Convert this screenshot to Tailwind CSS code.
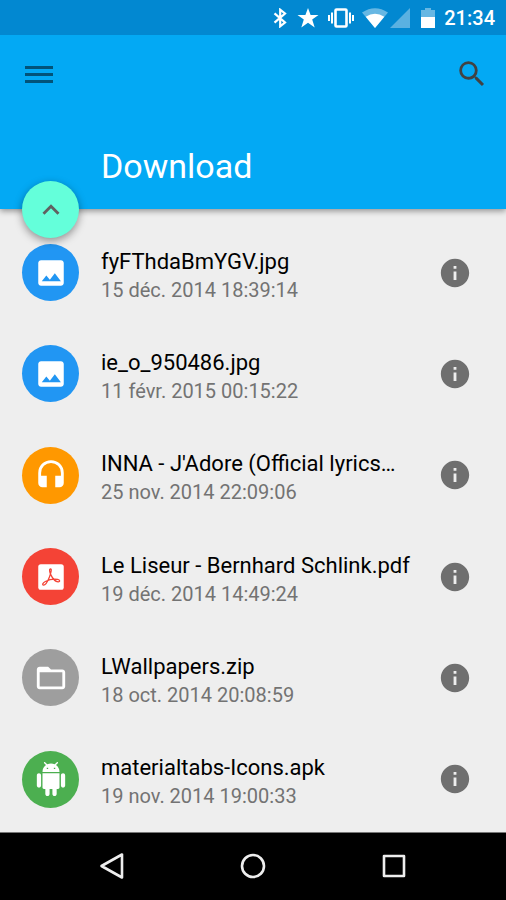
<!DOCTYPE html>
<html lang="fr">
<head>
<meta charset="utf-8">
<meta name="viewport" content="width=device-width, initial-scale=1">
<title>Download</title>
<script src="https://cdn.jsdelivr.net/npm/@tailwindcss/browser@4"></script>
</head>
<body class="flex min-h-screen flex-col bg-[#eeeeee] font-['Roboto','Noto_Sans',sans-serif] text-black">

<svg class="hidden" aria-hidden="true">
  <symbol id="image" viewBox="0 0 24 24"><path d="M21 19V5c0-1.1-.9-2-2-2H5c-1.1 0-2 .9-2 2v14c0 1.1.9 2 2 2h14c1.1 0 2-.9 2-2zM5.500 17.800l3.200-4.100 2.500 3 3.500-4.500 4.300 5.600z"/></symbol>
  <symbol id="audio" viewBox="0 0 24 24"><path d="M12 1.500a9 9 0 0 0-9 9v7.200c0 1.700 1.300 3 3 3h3v-8.200H5v-2a7 7 0 0 1 14 0v2h-4v8.200h3c1.700 0 3-1.300 3-3v-7.200a9 9 0 0 0-9-9z"/></symbol>
  <symbol id="pdf" viewBox="0 0 24 24"><rect x="3" y="3" width="18" height="18" rx="1.800"/><g fill="none" stroke="#f44336" stroke-width=".9" stroke-linejoin="round"><path d="M11.800 6.200c-1.300 0-.8 2.500.2 4.500 1.200 2.500 3 4.500 5 4.700 1.500.1 1.500-1.400-.3-1.700-2.700-.4-6.300.3-8.700 1.500-2 1-2.300 2.500-1.300 2.600 1.300.1 3-2.800 4.200-5.800.9-2.300 1.800-5.700.9-5.800z"/></g></symbol>
  <symbol id="folder" viewBox="0 0 24 24"><path d="M20 6h-8l-2-2H4c-1.100 0-2 .9-2 2v12c0 1.100.9 2 2 2h16c1.100 0 2-.9 2-2V8c0-1.100-.9-2-2-2zm0 12H4V8h16v10z"/></symbol>
  <symbol id="android" viewBox="0 0 24 24"><path d="M6 18c0 .55.45 1 1 1h1v3.500c0 .83.67 1.500 1.500 1.500s1.500-.67 1.500-1.500V19h2v3.500c0 .83.67 1.500 1.500 1.500s1.500-.67 1.500-1.500V19h1c.55 0 1-.45 1-1V8H6v10zM3.500 8C2.670 8 2 8.670 2 9.500v7c0 .83.67 1.500 1.500 1.500S5 17.330 5 16.500v-7C5 8.670 4.330 8 3.500 8zm17 0c-.83 0-1.500.67-1.500 1.500v7c0 .83.67 1.500 1.500 1.500s1.500-.67 1.500-1.500v-7c0-.83-.67-1.500-1.500-1.500zm-4.970-5.840l1.300-1.300c.2-.2.2-.51 0-.71s-.51-.2-.71 0l-1.480 1.480A5.840 5.840 0 0 0 12 1c-.96 0-1.860.23-2.660.63L7.850.15c-.2-.2-.51-.2-.71 0s-.2.51 0 .71l1.310 1.310A5.980 5.980 0 0 0 6 7h12c0-1.990-.97-3.750-2.470-4.840zM10 5H9V4h1v1zm5 0h-1V4h1v1z"/></symbol>
  <symbol id="info" viewBox="0 0 24 24"><path d="M12 2C6.480 2 2 6.480 2 12s4.480 10 10 10 10-4.480 10-10S17.520 2 12 2zm1 15h-2v-6h2v6zm0-8h-2V7h2v2z"/></symbol>
</svg>

<header class="relative z-10 bg-[#03a9f4] text-white shadow-[0_2px_6px_rgba(0,0,0,0.4)]">
  <div class="flex h-[35px] items-center justify-end bg-[#0288d1] pr-[11px]">
    <svg class="mr-[10px] h-5 w-[14px]" viewBox="0 0 14 20" fill="none" stroke="#fff" stroke-width="2.200"><path d="M1.500 5.300 12 14.500 7.200 18.300V1.700L12 5.500 1.500 14.700"/></svg>
    <svg class="mr-[9px] h-5 w-[22px]" viewBox="0 0 22 20" fill="#fff"><path d="m11 0 2.600 7H21.500l-6.300 4.600L17.700 19.500 11 14.800 4.300 19.500l2.500-7.900L.5 7h7.900z"/></svg>
    <svg class="mr-2 h-5 w-[26px]" viewBox="0 0 26 20" fill="none" stroke="#fff"><rect x="7.500" y="1.500" width="11" height="17" rx="1" stroke-width="2.600"/><path d="M4 4.500v11M22 4.500v11" stroke-width="2"/><path d="M1 7v6M25 7v6" stroke-width="2"/></svg>
    <svg class="mr-[2px] h-5 w-[26px]" viewBox="0 0 26 20" fill="#fff"><path opacity=".4" d="M0 4.500Q13-4 26 4.500L13 20z"/><path d="M3.700 8.800Q13 2.500 22.300 8.800L13 20z"/></svg>
    <svg class="mr-[11px] h-5 w-5" viewBox="0 0 20 20" fill="#fff"><path opacity=".35" d="M20 0v20H0z"/></svg>
    <svg class="mr-[9px] h-5 w-[14px]" viewBox="0 0 14 20" fill="#fff"><path opacity=".4" d="M4 0h6v2h4v7H0V2h4z"/><path d="M0 9h14v11H0z"/></svg>
    <span class="text-[20px] leading-6 font-medium">21:34</span>
  </div>
  <div class="flex h-[78px] items-center justify-between pr-[17px] pl-[25px]">
    <button type="button" aria-label="Menu"><svg class="h-[17px] w-7" viewBox="0 0 28 17" fill="#025379"><path d="M0 0h28v3H0zM0 7h28v3H0zM0 14h28v3H0z"/></svg></button>
    <button type="button" aria-label="Rechercher"><svg class="h-[34px] w-[34px]" viewBox="0 0 24 24" fill="#424242"><path d="M15.500 14h-.79l-.28-.27A6.471 6.471 0 0 0 16 9.500 6.500 6.500 0 1 0 9.500 16c1.610 0 3.090-.59 4.230-1.570l.27.28v.79l5 4.990L20.490 19l-4.990-5zm-6 0C7.010 14 5 11.990 5 9.500S7.010 5 9.500 5 14 7.010 14 9.500 11.990 14 9.500 14z"/></svg></button>
  </div>
  <h1 class="pt-[33px] pb-[23px] pl-[101px] text-[34px] leading-10">Download</h1>
  <button type="button" aria-label="Dossier parent" class="absolute -bottom-[29px] left-[22px] flex size-[57px] items-center justify-center rounded-full bg-[#64ffda] shadow-[0_3px_8px_rgba(0,0,0,0.4)]">
    <svg class="size-[34px]" viewBox="0 0 24 24" fill="none" stroke="#616161" stroke-width="2"><path d="m6.700 14.700 5.300-5.300 5.300 5.300"/></svg>
  </button>
</header>

<main class="relative flex flex-1 flex-col overflow-hidden pt-[13px] pb-[2px]">
  <ul class="flex flex-1 flex-col">
    <li class="flex min-h-[72px] flex-1 items-center pr-[34px] pl-[22px]">
      <span class="mr-[22px] flex size-[57px] shrink-0 items-center justify-center rounded-full bg-[#2196f3]"><svg class="size-[34px]" fill="#fff"><use href="#image"/></svg></span>
      <div class="min-w-0 flex-1 pt-[6px]"><p class="truncate text-[22px] leading-7">fyFThdaBmYGV.jpg</p><p class="text-[20px] leading-7 text-[#737373]">15 déc. 2014 18:39:14</p></div>
      <button type="button" aria-label="Informations"><svg class="size-[34px]" fill="#6f6f6f"><use href="#info"/></svg></button>
    </li>
    <li class="flex min-h-[72px] flex-1 items-center pr-[34px] pl-[22px]">
      <span class="mr-[22px] flex size-[57px] shrink-0 items-center justify-center rounded-full bg-[#2196f3]"><svg class="size-[34px]" fill="#fff"><use href="#image"/></svg></span>
      <div class="min-w-0 flex-1 pt-[6px]"><p class="truncate text-[22px] leading-7">ie_o_950486.jpg</p><p class="text-[20px] leading-7 text-[#737373]">11 févr. 2015 00:15:22</p></div>
      <button type="button" aria-label="Informations"><svg class="size-[34px]" fill="#6f6f6f"><use href="#info"/></svg></button>
    </li>
    <li class="flex min-h-[72px] flex-1 items-center pr-[34px] pl-[22px]">
      <span class="mr-[22px] flex size-[57px] shrink-0 items-center justify-center rounded-full bg-[#ff9800]"><svg class="size-[34px]" fill="#fff"><use href="#audio"/></svg></span>
      <div class="min-w-0 flex-1 pt-[6px]"><p class="truncate text-[22px] leading-7">INNA - J'Adore (Official lyrics…</p><p class="text-[20px] leading-7 text-[#737373]">25 nov. 2014 22:09:06</p></div>
      <button type="button" aria-label="Informations"><svg class="size-[34px]" fill="#6f6f6f"><use href="#info"/></svg></button>
    </li>
    <li class="flex min-h-[72px] flex-1 items-center pr-[34px] pl-[22px]">
      <span class="mr-[22px] flex size-[57px] shrink-0 items-center justify-center rounded-full bg-[#f44336]"><svg class="size-[34px]" fill="#fff"><use href="#pdf"/></svg></span>
      <div class="min-w-0 flex-1 pt-[6px]"><p class="truncate text-[22px] leading-7">Le Liseur - Bernhard Schlink.pdf</p><p class="text-[20px] leading-7 text-[#737373]">19 déc. 2014 14:49:24</p></div>
      <button type="button" aria-label="Informations"><svg class="size-[34px]" fill="#6f6f6f"><use href="#info"/></svg></button>
    </li>
    <li class="flex min-h-[72px] flex-1 items-center pr-[34px] pl-[22px]">
      <span class="mr-[22px] flex size-[57px] shrink-0 items-center justify-center rounded-full bg-[#9e9e9e]"><svg class="size-[34px]" fill="#fff"><use href="#folder"/></svg></span>
      <div class="min-w-0 flex-1 pt-[6px]"><p class="truncate text-[22px] leading-7">LWallpapers.zip</p><p class="text-[20px] leading-7 text-[#737373]">18 oct. 2014 20:08:59</p></div>
      <button type="button" aria-label="Informations"><svg class="size-[34px]" fill="#6f6f6f"><use href="#info"/></svg></button>
    </li>
    <li class="flex min-h-[72px] flex-1 items-center pr-[34px] pl-[22px]">
      <span class="mr-[22px] flex size-[57px] shrink-0 items-center justify-center rounded-full bg-[#4caf50]"><svg class="size-[34px]" fill="#fff"><use href="#android"/></svg></span>
      <div class="min-w-0 flex-1 pt-[6px]"><p class="truncate text-[22px] leading-7">materialtabs-Icons.apk</p><p class="text-[20px] leading-7 text-[#737373]">19 nov. 2014 19:00:33</p></div>
      <button type="button" aria-label="Informations"><svg class="size-[34px]" fill="#6f6f6f"><use href="#info"/></svg></button>
    </li>
  </ul>
</main>

<nav class="grid h-[68px] grid-cols-3 place-items-center border-t border-[#777777] bg-black px-[42px] pb-[2px]">
  <button type="button" aria-label="Retour"><svg class="size-7" viewBox="0 0 28 28" fill="none" stroke="#eee" stroke-width="2.600" stroke-linejoin="round"><path d="M24 2.500v23L3.500 14z"/></svg></button>
  <button type="button" aria-label="Accueil"><svg class="size-7" viewBox="0 0 28 28" fill="none" stroke="#eee" stroke-width="2.600"><circle cx="14" cy="14" r="11"/></svg></button>
  <button type="button" aria-label="Applications récentes"><svg class="size-7" viewBox="0 0 28 28" fill="none" stroke="#eee" stroke-width="2.600" stroke-linejoin="round"><path d="M4 4h20v20H4z"/></svg></button>
</nav>
</body>
</html>
